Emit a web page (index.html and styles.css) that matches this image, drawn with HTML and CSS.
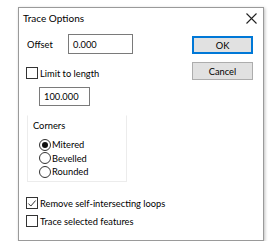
FILE: index.html
```html
<!DOCTYPE html>
<html>
<head>
<meta charset="utf-8">
<link rel="stylesheet" href="styles.css">
</head>
<body>
<div class="dialog">
  <div class="titlebar">
    <span class="title">Trace Options</span>
    <svg class="close" width="11" height="11" viewBox="0 0 11 11"><path d="M0.5 0.5 L10.5 10.5 M10.5 0.5 L0.5 10.5" stroke="#222" stroke-width="1.1" fill="none"/></svg>
  </div>
  <div class="content">
    <div class="left">
      <div class="row offset-row">
        <span class="label">Offset</span>
        <div class="input offset-input">0.000</div>
      </div>
      <div class="row check-row limit-row">
        <span class="checkbox"></span>
        <span>Limit to length</span>
      </div>
      <div class="input length-input">100.000</div>
      <div class="group">
        <div class="group-label">Corners</div>
        <div class="radio-row"><span class="radio checked"></span><span>Mitered</span></div>
        <div class="radio-row"><span class="radio"></span><span>Bevelled</span></div>
        <div class="radio-row"><span class="radio"></span><span>Rounded</span></div>
      </div>
      <div class="row check-row remove-row">
        <span class="checkbox checked"><svg width="11" height="11" viewBox="0 0 11 11"><path d="M1.5 5.5 L4.2 8.3 L9.5 2.2" stroke="#333" stroke-width="1.1" fill="none"/></svg></span>
        <span>Remove self-intersecting loops</span>
      </div>
      <div class="row check-row trace-row">
        <span class="checkbox"></span>
        <span>Trace selected features</span>
      </div>
    </div>
    <div class="right">
      <div class="button default">OK</div>
      <div class="button">Cancel</div>
    </div>
  </div>
</div>
</body>
</html>
```

FILE: styles.css
```css
html, body {
  margin: 0;
  padding: 0;
  background: #ffffff;
}
body {
  font-family: Lato, "Noto Sans", sans-serif;
  font-size: 9.3px;
  color: #000;
}
.dialog {
  box-sizing: border-box;
  width: 246px;
  height: 234px;
  margin: 7px 0 0 18px;
  border: 1px solid #9a9a9a;
  background: #fff;
  box-shadow: 1px 1px 3px rgba(0,0,0,0.25);
}
.titlebar {
  height: 20px;
  display: flex;
  align-items: center;
  justify-content: space-between;
  padding: 0 6px 0 4px;
}
.title {
  font-size: 10px;
}
.close {
  display: block;
}
.content {
  display: flex;
  justify-content: space-between;
  padding: 0 10px 0 7px;
}
.left {
  display: flex;
  flex-direction: column;
  align-items: flex-start;
}
.row {
  display: flex;
  align-items: center;
}
.offset-row {
  margin-top: 6px;
  height: 20px;
  padding-left: 1px;
}
.label {
  width: 41px;
}
.input {
  box-sizing: border-box;
  border: 1px solid #7a7a7a;
  display: flex;
  align-items: center;
  padding-left: 4px;
  background: #fff;
}
.offset-input {
  width: 65px;
  height: 20px;
}
.check-row {
  height: 14px;
}
.limit-row {
  margin-top: 12px;
}
.checkbox {
  box-sizing: border-box;
  width: 12px;
  height: 12px;
  border: 1px solid #333;
  margin-right: 2px;
  display: flex;
  align-items: center;
  justify-content: center;
  background: #fff;
}
.checkbox svg {
  display: block;
}
.length-input {
  margin-top: 7px;
  margin-left: 13px;
  width: 51px;
  height: 19px;
}
.group {
  box-sizing: border-box;
  margin-top: 9px;
  margin-left: 1px;
  width: 100px;
  height: 67px;
  border: 1px solid #ececec;
  border-top-color: #fff;
  padding: 3px 0 0 5px;
}
.group-label {
  height: 14px;
  line-height: 14px;
  margin-bottom: 5px;
}
.radio-row {
  display: flex;
  align-items: center;
  height: 13.5px;
  padding-left: 6px;
}
.radio {
  box-sizing: border-box;
  width: 12px;
  height: 12px;
  border: 1px solid #333;
  border-radius: 50%;
  margin-right: 1px;
  display: flex;
  align-items: center;
  justify-content: center;
}
.radio.checked::after {
  content: "";
  width: 6px;
  height: 6px;
  border-radius: 50%;
  background: #111;
}
.remove-row {
  margin-top: 14px;
}
.trace-row {
  margin-top: 4px;
}
.right {
  display: flex;
  flex-direction: column;
  padding-top: 8px;
}
.button {
  box-sizing: border-box;
  width: 61px;
  height: 18px;
  border: 1px solid #adadad;
  background: #e1e1e1;
  display: flex;
  align-items: center;
  justify-content: center;
  margin-bottom: 8px;
}
.button.default {
  border: 1px solid #0078d7;
  box-shadow: inset 0 0 0 1px #0078d7;
}
```
